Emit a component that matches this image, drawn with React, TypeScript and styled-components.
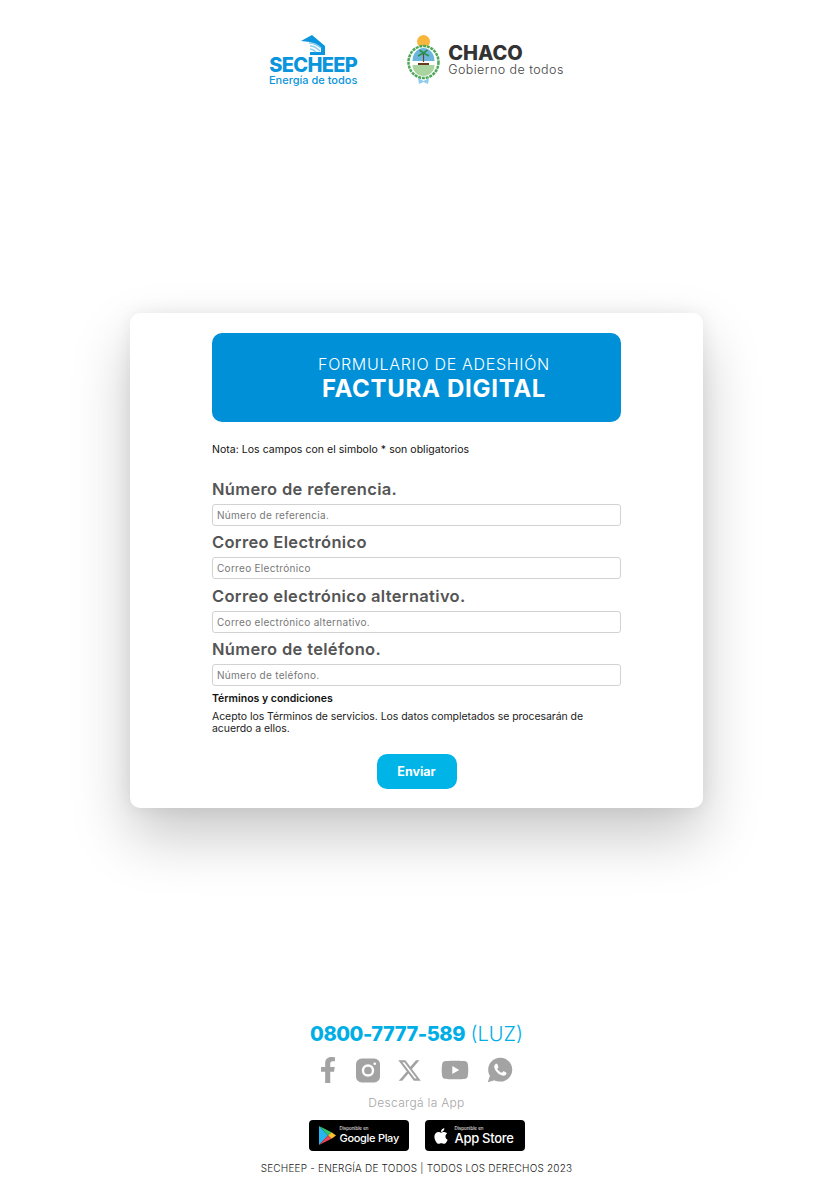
import React from 'react';
import styled, { createGlobalStyle } from 'styled-components';
import { FaApple, FaFacebookF, FaYoutube } from 'react-icons/fa';
import { FaXTwitter } from 'react-icons/fa6';
import { IoLogoWhatsapp } from 'react-icons/io';

const GlobalStyle = createGlobalStyle`
  html, body {
    margin: 0;
    padding: 0;
    background: #fff;
    font-family: Inter, "Open Sans", sans-serif;
  }
  * {
    box-sizing: border-box;
  }
`;

const Page = styled.div`
  width: 834px;
  height: 1194px;
  display: flex;
  flex-direction: column;
  align-items: center;
  overflow: hidden;
`;

const Header = styled.header`
  display: flex;
  align-items: flex-start;
  height: 313px;
  padding: 35px 0 0 0;
  margin-right: 1px;
  gap: 50px;
`;

const SecheepLogo = styled.div`
  width: 88px;
  display: flex;
  flex-direction: column;
  align-items: center;
  color: #0a95dc;
`;

const SecheepName = styled.span`
  font-size: 20px;
  line-height: 19px;
  margin-top: 1px;
  font-weight: 800;
  letter-spacing: -0.7px;
  white-space: nowrap;
`;

const SecheepTagline = styled.span`
  font-size: 11px;
  line-height: 12px;
  margin-top: -1px;
  font-weight: 500;
  white-space: nowrap;
`;

const ChacoLogo = styled.div`
  display: flex;
  align-items: center;
  gap: 7px;
`;

const ChacoText = styled.div`
  display: flex;
  flex-direction: column;
`;

const ChacoName = styled.span`
  font-size: 20px;
  line-height: 20px;
  font-weight: 800;
  color: #333;
`;

const ChacoTagline = styled.span`
  font-size: 12.5px;
  line-height: 14px;
  font-weight: 300;
  letter-spacing: 0.45px;
  color: #444;
  white-space: nowrap;
`;

const Card = styled.main`
  width: 573px;
  height: 495px;
  margin-right: 1px;
  flex: none;
  background: #fff;
  border-radius: 10px;
  padding: 20px 82px 0;
  box-shadow: 0 28px 58px rgba(0, 0, 0, 0.22), 0 0 18px rgba(0, 0, 0, 0.07);
`;

const Banner = styled.div`
  height: 89px;
  border-radius: 10px;
  background: #0090d7;
  color: #fff;
  display: flex;
  flex-direction: column;
  align-items: center;
  justify-content: center;
  padding-left: 35px;
`;

const BannerTitle = styled.span`
  font-size: 16px;
  line-height: 22px;
  font-weight: 300;
  letter-spacing: 0.7px;
`;

const BannerStrong = styled.span`
  font-size: 24px;
  line-height: 28px;
  font-weight: 700;
  letter-spacing: 0.7px;
`;

const Note = styled.p`
  margin: 21px 0 0;
  height: 14px;
  font-size: 10.5px;
  line-height: 14px;
  letter-spacing: 0.04px;
  color: #111;
`;

const Fields = styled.div`
  margin-top: 21px;
  display: flex;
  flex-direction: column;
`;

const Field = styled.label`
  display: flex;
  flex-direction: column;
  height: 53.4px;
`;

const FieldLabel = styled.span`
  font-size: 16.5px;
  line-height: 22px;
  font-weight: 600;
  letter-spacing: 0.33px;
  color: #555;
  margin-bottom: 4px;
`;

const FieldInput = styled.input`
  width: 100%;
  height: 22px;
  border: 1px solid #d2d2d2;
  border-radius: 3px;
  padding: 0 4px;
  font: 400 10px Inter, sans-serif;
  letter-spacing: 0.3px;
  outline: none;
  &::placeholder {
    color: #777;
    opacity: 1;
  }
`;

const TermsTitle = styled.h4`
  margin: 0;
  font-size: 10.5px;
  line-height: 14px;
  font-weight: 600;
  color: #111;
`;

const TermsText = styled.p`
  margin: 5px 0 0;
  font-size: 10.5px;
  line-height: 12px;
  letter-spacing: -0.06px;
  color: #222;
`;

const Actions = styled.div`
  display: flex;
  justify-content: center;
  margin-top: 19px;
`;

const SubmitButton = styled.button`
  width: 80px;
  height: 35px;
  border: none;
  border-radius: 10px;
  background: #00b4e8;
  color: #fff;
  font: 700 12.5px Inter, sans-serif;
`;

const Footer = styled.footer`
  margin-top: 214px;
  margin-right: 1px;
  display: flex;
  flex-direction: column;
  align-items: center;
`;

const Phone = styled.div`
  font-size: 20px;
  line-height: 24px;
  color: #00aee6;
  font-weight: 300;
`;

const PhoneNumber = styled.strong`
  font-weight: 800;
  letter-spacing: -0.45px;
`;

const Socials = styled.div`
  display: flex;
  align-items: center;
  gap: 16px;
  height: 30px;
  margin-top: 9px;
  margin-right: 3px;
  color: #a3a3a3;
`;

const SocialIcon = styled.span<{ $width: number }>`
  width: ${(p) => p.$width}px;
  display: flex;
  justify-content: center;
`;

const AppLabel = styled.div`
  margin-top: 10px;
  font-size: 12px;
  line-height: 16px;
  font-weight: 300;
  letter-spacing: 0.3px;
  color: #a6a6a6;
`;

const Badges = styled.div`
  display: flex;
  gap: 16px;
  margin-top: 9px;
  margin-left: 2px;
`;

const Badge = styled.div<{ $gap: number }>`
  width: 100px;
  height: 31px;
  border-radius: 4px;
  background: #000;
  color: #fff;
  display: flex;
  align-items: center;
  gap: ${(p) => p.$gap}px;
`;

const BadgeIcon = styled.span<{ $width: number }>`
  flex: none;
  display: flex;
  width: ${(p) => p.$width}px;
  justify-content: flex-end;
`;

const BadgeText = styled.div`
  display: flex;
  flex-direction: column;
`;

const BadgeSmall = styled.span`
  font-size: 4.5px;
  line-height: 6px;
`;

const BadgeName = styled.span<{ $size: number }>`
  font-size: ${(p) => p.$size}px;
  line-height: 13px;
  font-weight: 500;
  letter-spacing: -0.3px;
  white-space: nowrap;
`;

const Copyright = styled.div`
  margin-top: 10px;
  font-size: 10px;
  line-height: 14px;
  font-weight: 300;
  letter-spacing: 0.2px;
  color: #222;
`;

const SecheepMark = () => (
  <svg width="26" height="20" viewBox="0 0 26 20">
    <path d="M1 6 L12 0 L25 11 L25 20 L10 20 L10 17 L21 17 L21 13 L10 7 Z" fill="#0a95dc" />
    <path d="M9 8 Q16 8 21 13 M10 11 Q15 11 20 16 M10 14 Q13 14 16 17" stroke="#8ccdf0" strokeWidth="1.3" fill="none" />
  </svg>
);

const ChacoShield = () => (
  <svg width="34" height="50" viewBox="0 0 34 50">
    <circle cx="16.5" cy="6.5" r="6.5" fill="#f6b73c" />
    <ellipse cx="16.5" cy="27" rx="15" ry="16" fill="#fff" stroke="#4fa85a" strokeWidth="2.5" strokeDasharray="3 0.8" />
    <ellipse cx="16.5" cy="27" rx="11" ry="13.5" fill="#fff" />
    <path d="M5.5 26 A11 13 0 0 1 27.5 26 Z" fill="#6cb6de" />
    <path d="M5.5 30 L27.5 30 A11 11 0 0 1 5.5 30 Z" fill="#a9d4a0" />
    <path d="M16.5 27 L16.5 18" stroke="#6b4a2b" strokeWidth="1.2" />
    <path d="M16.5 18 L11 21 M16.5 18 L22 21 M16.5 18 L12.5 15 M16.5 18 L20.5 15" stroke="#2f8f4a" strokeWidth="1.6" />
    <path d="M11 29 L22 29" stroke="#6b3a1e" strokeWidth="2" />
    <path d="M11 43 L16.5 46 L22 43 L21 49 L16.5 47 L12 49 Z" fill="#8ecbee" />
  </svg>
);

const InstagramMark = () => (
  <svg width="25" height="25" viewBox="0 0 25 25">
    <path
      fillRule="evenodd"
      fill="currentColor"
      d="M6 0 H19 A6 6 0 0 1 25 6 V19 A6 6 0 0 1 19 25 H6 A6 6 0 0 1 0 19 V6 A6 6 0 0 1 6 0 Z M12.5 6 A6.5 6.5 0 1 0 12.5 19 A6.5 6.5 0 1 0 12.5 6 Z M12.5 8.5 A4 4 0 1 1 12.5 16.5 A4 4 0 1 1 12.5 8.5 Z"
    />
    <circle cx="19.5" cy="5.5" r="1.4" fill="#fff" />
  </svg>
);

const GooglePlayMark = () => (
  <svg width="17" height="19" viewBox="0 0 17 19">
    <path d="M0 0 L9 9.5 L0 19 Z" fill="#27b5f0" />
    <path d="M0 0 L12.5 6.2 L9 9.5 Z" fill="#35c46b" />
    <path d="M12.5 6.2 L17 9.5 L12.5 12.8 L9 9.5 Z" fill="#fbc02d" />
    <path d="M0 19 L9 9.5 L12.5 12.8 Z" fill="#ee4350" />
  </svg>
);

const fields = [
  'Número de referencia.',
  'Correo Electrónico',
  'Correo electrónico alternativo.',
  'Número de teléfono.',
];

const App: React.FC = () => {
  return (
    <Page>
      <GlobalStyle />
      <Header>
        <SecheepLogo>
          <SecheepMark />
          <SecheepName>SECHEEP</SecheepName>
          <SecheepTagline>Energía de todos</SecheepTagline>
        </SecheepLogo>
        <ChacoLogo>
          <ChacoShield />
          <ChacoText>
            <ChacoName>CHACO</ChacoName>
            <ChacoTagline>Gobierno de todos</ChacoTagline>
          </ChacoText>
        </ChacoLogo>
      </Header>

      <Card>
        <Banner>
          <BannerTitle>FORMULARIO DE ADESHIÓN</BannerTitle>
          <BannerStrong>FACTURA DIGITAL</BannerStrong>
        </Banner>
        <Note>Nota: Los campos con el simbolo * son obligatorios</Note>
        <Fields>
          {fields.map((name) => (
            <Field key={name}>
              <FieldLabel>{name}</FieldLabel>
              <FieldInput placeholder={name} />
            </Field>
          ))}
        </Fields>
        <TermsTitle>Términos y condiciones</TermsTitle>
        <TermsText>
          Acepto los Términos de servicios. Los datos completados se procesarán de acuerdo a ellos.
        </TermsText>
        <Actions>
          <SubmitButton>Enviar</SubmitButton>
        </Actions>
      </Card>

      <Footer>
        <Phone>
          <PhoneNumber>0800-7777-589</PhoneNumber> (LUZ)
        </Phone>
        <Socials>
          <SocialIcon $width={24}><FaFacebookF size={26} /></SocialIcon>
          <SocialIcon $width={24}><InstagramMark /></SocialIcon>
          <SocialIcon $width={28}><FaXTwitter size={25} /></SocialIcon>
          <SocialIcon $width={30}><FaYoutube size={28} /></SocialIcon>
          <SocialIcon $width={28}><IoLogoWhatsapp size={30} /></SocialIcon>
        </Socials>
        <AppLabel>Descargá la App</AppLabel>
        <Badges>
          <Badge $gap={3}>
            <BadgeIcon $width={27}><GooglePlayMark /></BadgeIcon>
            <BadgeText>
              <BadgeSmall>Disponible en</BadgeSmall>
              <BadgeName $size={11}>Google Play</BadgeName>
            </BadgeText>
          </Badge>
          <Badge $gap={4}>
            <BadgeIcon $width={25}><FaApple size={18} /></BadgeIcon>
            <BadgeText>
              <BadgeSmall>Disponible en</BadgeSmall>
              <BadgeName $size={13}>App Store</BadgeName>
            </BadgeText>
          </Badge>
        </Badges>
        <Copyright>SECHEEP - ENERGÍA DE TODOS | TODOS LOS DERECHOS 2023</Copyright>
      </Footer>
    </Page>
  );
};

export default App;
